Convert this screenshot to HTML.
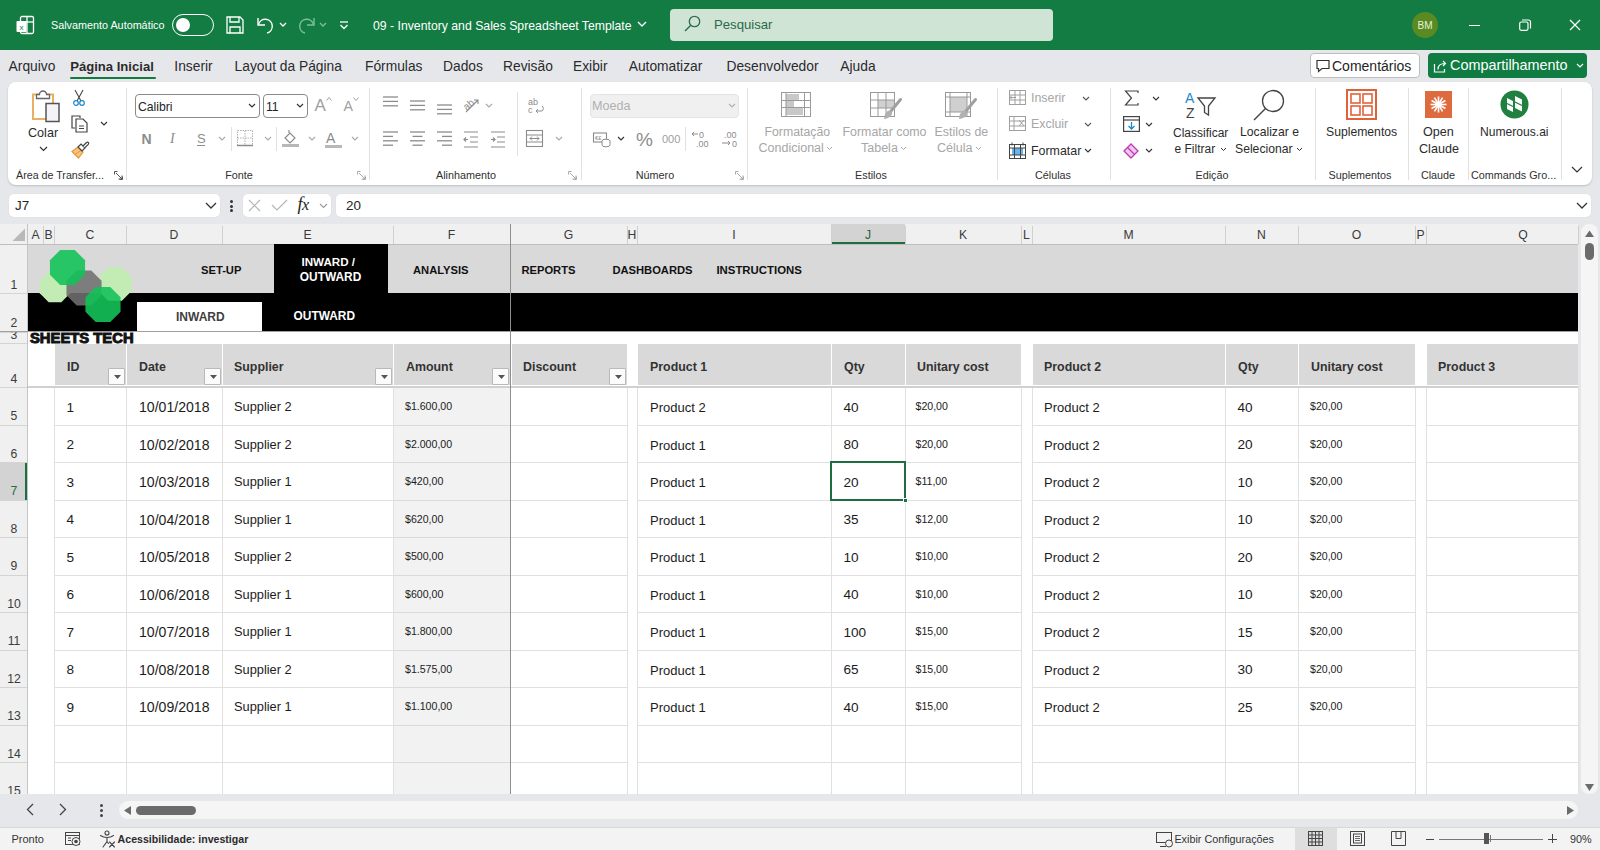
<!DOCTYPE html><html><head><meta charset="utf-8"><style>
*{margin:0;padding:0;box-sizing:border-box}
html,body{width:1600px;height:850px;overflow:hidden;background:#e6e7eb;font-family:"Liberation Sans",sans-serif;color:#242424}
.ab{position:absolute}
.t{position:absolute;white-space:nowrap;line-height:1}
svg{position:absolute;overflow:visible}
</style></head><body><div class="ab" style="left:0px;top:0px;width:1600px;height:50px;background:#137c43"></div>
<svg style="left:16px;top:16px;" width="18" height="18" viewBox="0 0 18 18"><rect x="4.5" y="0.5" width="13" height="17" rx="1.5" fill="none" stroke="#fff" stroke-width="1.3"/><line x1="11" y1="1" x2="11" y2="17" stroke="#fff" stroke-width="1.3"/><line x1="5" y1="6" x2="17" y2="6" stroke="#fff" stroke-width="1.3"/><rect x="0.5" y="5" width="10" height="11" rx="1" fill="#fff"/><text x="5.5" y="13.5" font-size="8" text-anchor="middle" fill="#137c43" font-family="Liberation Sans">x</text></svg>
<div class="t" style="left:51px;top:19.86px;font-size:10.8px;color:#fff;font-weight:400;">Salvamento Automático</div>
<div class="ab" style="left:172px;top:14px;width:42px;height:22px;border:1.5px solid #fff;border-radius:11px"></div>
<div class="ab" style="left:176px;top:18px;width:14px;height:14px;background:#fff;border-radius:50%"></div>
<svg style="left:226px;top:16px;" width="18" height="18" viewBox="0 0 18 18"><path d="M1 1h13l3 3v13H1z" fill="none" stroke="#fff" stroke-width="1.3"/><path d="M4 1v5h9V1" fill="none" stroke="#fff" stroke-width="1.3"/><path d="M4 17v-6h10v6" fill="none" stroke="#fff" stroke-width="1.3"/></svg>
<svg style="left:256px;top:16px;" width="20" height="18" viewBox="0 0 20 18"><path d="M2 2v7h7" fill="none" stroke="#fff" stroke-width="1.4"/><path d="M2.5 8.5A7 7 0 1 1 11 17" fill="none" stroke="#fff" stroke-width="1.4"/></svg>
<svg style="left:279px;top:22px;" width="8" height="6" viewBox="0 0 8 6"><path d="M1 1l3 3 3-3" fill="none" stroke="#fff" stroke-width="1.3"/></svg>
<svg style="left:296px;top:16px;" width="20" height="18" viewBox="0 0 20 18"><path d="M18 2v7h-7" fill="none" stroke="#7fbf99" stroke-width="1.4"/><path d="M17.5 8.5A7 7 0 1 0 9 17" fill="none" stroke="#7fbf99" stroke-width="1.4"/></svg>
<svg style="left:319px;top:22px;" width="8" height="6" viewBox="0 0 8 6"><path d="M1 1l3 3 3-3" fill="none" stroke="#7fbf99" stroke-width="1.3"/></svg>
<svg style="left:339px;top:21px;" width="10" height="9" viewBox="0 0 10 9"><line x1="1" y1="1" x2="9" y2="1" stroke="#fff" stroke-width="1.3"/><path d="M1.5 4l3.5 3.5 3.5-3.5" fill="none" stroke="#fff" stroke-width="1.3"/></svg>
<div class="t" style="left:373px;top:19.63px;font-size:12.25px;color:#fff;font-weight:400;">09 - Inventory and Sales Spreadsheet Template</div>
<svg style="left:637px;top:21px;" width="10" height="7" viewBox="0 0 10 7"><path d="M1 1l4 4 4-4" fill="none" stroke="#fff" stroke-width="1.3"/></svg>
<div class="ab" style="left:670px;top:9px;width:383px;height:32px;background:#d0e4d6;border-radius:4px"></div>
<svg style="left:684px;top:15px;" width="17" height="17" viewBox="0 0 17 17"><circle cx="10.5" cy="6.5" r="5.2" fill="none" stroke="#2e6b48" stroke-width="1.3"/><line x1="6.8" y1="10.2" x2="1" y2="16" stroke="#2e6b48" stroke-width="1.4"/></svg>
<div class="t" style="left:714px;top:18.37px;font-size:13.15px;color:#2c6946;font-weight:400;">Pesquisar</div>
<div class="ab" style="left:1412px;top:12px;width:26px;height:26px;background:#5a8a22;border-radius:50%"></div>
<div class="t" style="left:1417.5px;top:20.54px;font-size:10px;color:#e9f2dc;font-weight:400;">BM</div>
<div class="ab" style="left:1469px;top:24.5px;width:11px;height:1.2px;background:#fff"></div>
<svg style="left:1519px;top:19px;" width="12" height="12" viewBox="0 0 12 12"><rect x="0.7" y="3" width="8.3" height="8.3" rx="1.5" fill="none" stroke="#fff" stroke-width="1.2"/><path d="M3 1h6.5a2 2 0 0 1 2 2v6.5" fill="none" stroke="#fff" stroke-width="1.2"/></svg>
<svg style="left:1569px;top:19px;" width="12" height="12" viewBox="0 0 12 12"><path d="M1 1l10 10M11 1L1 11" stroke="#fff" stroke-width="1.3"/></svg>
<div class="t" style="left:8px;top:59.82px;font-size:13.8px;font-weight:400;color:#2b2b2b;width:48px;text-align:center">Arquivo</div>
<div class="t" style="left:70px;top:60.41px;font-size:13.1px;font-weight:700;color:#2b2b2b;width:84px;text-align:center">Página Inicial</div>
<div class="t" style="left:174px;top:59.82px;font-size:13.8px;font-weight:400;color:#2b2b2b;width:39px;text-align:center">Inserir</div>
<div class="t" style="left:234px;top:59.82px;font-size:13.8px;font-weight:400;color:#2b2b2b;width:108.5px;text-align:center">Layout da Página</div>
<div class="t" style="left:365px;top:59.82px;font-size:13.8px;font-weight:400;color:#2b2b2b;width:57px;text-align:center">Fórmulas</div>
<div class="t" style="left:443px;top:59.82px;font-size:13.8px;font-weight:400;color:#2b2b2b;width:39px;text-align:center">Dados</div>
<div class="t" style="left:503px;top:59.82px;font-size:13.8px;font-weight:400;color:#2b2b2b;width:47px;text-align:center">Revisão</div>
<div class="t" style="left:573px;top:59.82px;font-size:13.8px;font-weight:400;color:#2b2b2b;width:33.5px;text-align:center">Exibir</div>
<div class="t" style="left:627px;top:59.82px;font-size:13.8px;font-weight:400;color:#2b2b2b;width:77px;text-align:center">Automatizar</div>
<div class="t" style="left:726px;top:59.82px;font-size:13.8px;font-weight:400;color:#2b2b2b;width:93px;text-align:center">Desenvolvedor</div>
<div class="t" style="left:840px;top:59.82px;font-size:13.8px;font-weight:400;color:#2b2b2b;width:36px;text-align:center">Ajuda</div>
<div class="ab" style="left:70px;top:76.5px;width:86px;height:2.5px;background:#107c41;border-radius:1px"></div>
<div class="ab" style="left:1310px;top:53px;width:110px;height:25px;background:#fff;border:1px solid #bdbdbd;border-radius:4px"></div>
<svg style="left:1316px;top:59px;" width="14" height="14" viewBox="0 0 14 14"><path d="M1 1.5h12v8H6l-3.5 3v-3H1z" fill="none" stroke="#333" stroke-width="1.2"/></svg>
<div class="t" style="left:1332px;top:58.65px;font-size:14px;color:#242424;font-weight:400;">Comentários</div>
<div class="ab" style="left:1428px;top:53px;width:159px;height:25px;background:#107c41;border-radius:4px"></div>
<svg style="left:1433px;top:59px;" width="15" height="14" viewBox="0 0 15 14"><path d="M1.5 5v8h10V10" fill="none" stroke="#fff" stroke-width="1.2"/><path d="M5 10.5c0-4 2.5-6 7-6M10 2l2.5 2.5L10 7" fill="none" stroke="#fff" stroke-width="1.2"/></svg>
<div class="t" style="left:1450px;top:58.31px;font-size:14.4px;color:#fff;font-weight:400;">Compartilhamento</div>
<svg style="left:1576px;top:63px;" width="8" height="6" viewBox="0 0 8 6"><path d="M1 1l3 3 3-3" fill="none" stroke="#fff" stroke-width="1.2"/></svg>
<!--RIBBON-->
<!--FORMULA-->
<!--GRID-->
<!--BOTTOM-->
<div class="ab" style="left:8px;top:82px;width:1584px;height:103px;background:#fff;border-radius:8px;box-shadow:0 1px 2px rgba(0,0,0,0.18)"></div>
<div class="ab" style="left:126px;top:88px;width:1px;height:92px;background:#e1e1e1"></div>
<div class="ab" style="left:369px;top:88px;width:1px;height:92px;background:#e1e1e1"></div>
<div class="ab" style="left:581px;top:88px;width:1px;height:92px;background:#e1e1e1"></div>
<div class="ab" style="left:747px;top:88px;width:1px;height:92px;background:#e1e1e1"></div>
<div class="ab" style="left:997px;top:88px;width:1px;height:92px;background:#e1e1e1"></div>
<div class="ab" style="left:1110px;top:88px;width:1px;height:92px;background:#e1e1e1"></div>
<div class="ab" style="left:1315px;top:88px;width:1px;height:92px;background:#e1e1e1"></div>
<div class="ab" style="left:1408px;top:88px;width:1px;height:92px;background:#e1e1e1"></div>
<div class="ab" style="left:1468px;top:88px;width:1px;height:92px;background:#e1e1e1"></div>
<div class="ab" style="left:1561px;top:88px;width:1px;height:92px;background:#e1e1e1"></div>
<div class="ab" style="left:517px;top:92px;width:1px;height:64px;background:#e1e1e1"></div>
<div class="t" style="left:16px;top:169.94px;font-size:10.7px;color:#303030;font-weight:400;">Área de Transfer...</div>
<div class="t" style="left:200px;top:169.86px;width:78px;text-align:center;font-size:10.8px;color:#303030">Fonte</div>
<div class="t" style="left:420px;top:169.86px;width:92px;text-align:center;font-size:10.8px;color:#303030">Alinhamento</div>
<div class="t" style="left:620px;top:169.86px;width:70px;text-align:center;font-size:10.8px;color:#303030">Número</div>
<div class="t" style="left:830px;top:169.86px;width:82px;text-align:center;font-size:10.8px;color:#303030">Estilos</div>
<div class="t" style="left:1010px;top:169.86px;width:86px;text-align:center;font-size:10.8px;color:#303030">Células</div>
<div class="t" style="left:1170px;top:169.86px;width:84px;text-align:center;font-size:10.8px;color:#303030">Edição</div>
<div class="t" style="left:1320px;top:169.86px;width:80px;text-align:center;font-size:10.8px;color:#303030">Suplementos</div>
<div class="t" style="left:1409px;top:169.86px;width:58px;text-align:center;font-size:10.8px;color:#303030">Claude</div>
<div class="t" style="left:1471px;top:169.86px;font-size:10.8px;color:#303030;font-weight:400;">Commands Gro...</div>
<svg style="left:114px;top:171px;" width="9" height="9" viewBox="0 0 9 9"><path d="M0.5 3.5V0.5h3M8.5 5.5v3h-3M2 2l6 6M8 4.5V8H4.5" fill="none" stroke="#555" stroke-width="1"/></svg>
<svg style="left:357px;top:171px;" width="9" height="9" viewBox="0 0 9 9"><path d="M0.5 3.5V0.5h3M8.5 5.5v3h-3M2 2l6 6M8 4.5V8H4.5" fill="none" stroke="#aaa" stroke-width="1"/></svg>
<svg style="left:568px;top:171px;" width="9" height="9" viewBox="0 0 9 9"><path d="M0.5 3.5V0.5h3M8.5 5.5v3h-3M2 2l6 6M8 4.5V8H4.5" fill="none" stroke="#aaa" stroke-width="1"/></svg>
<svg style="left:735px;top:171px;" width="9" height="9" viewBox="0 0 9 9"><path d="M0.5 3.5V0.5h3M8.5 5.5v3h-3M2 2l6 6M8 4.5V8H4.5" fill="none" stroke="#aaa" stroke-width="1"/></svg>
<svg style="left:28px;top:88px;" width="34" height="36" viewBox="0 0 34 36"><rect x="5" y="6.5" width="20" height="24.5" fill="#fff" stroke="#eab061" stroke-width="2"/><path d="M8.5 10.5V6.5h3a3.5 3.5 0 0 1 7 0h3v4z" fill="#fff" stroke="#666" stroke-width="1.3"/><rect x="18" y="15.5" width="13" height="18" fill="#f3f3f8" stroke="#555" stroke-width="1.5"/></svg>
<div class="t" style="left:28px;top:127.33px;font-size:12.6px;color:#2b2b2b;font-weight:400;">Colar</div>
<svg style="left:39px;top:146px;" width="9" height="6" viewBox="0 0 9 6"><path d="M1 1l3.5 3.5L8 1" fill="none" stroke="#333" stroke-width="1.2"/></svg>
<svg style="left:72px;top:89px;" width="14" height="17" viewBox="0 0 14 17"><path d="M3 1l6 11M11 1L5 12" stroke="#444" stroke-width="1.1"/><circle cx="4" cy="14" r="2.3" fill="none" stroke="#1e88c8" stroke-width="1.2"/><circle cx="10" cy="14" r="2.3" fill="none" stroke="#1e88c8" stroke-width="1.2"/></svg>
<svg style="left:71px;top:115px;" width="18" height="18" viewBox="0 0 18 18"><path d="M4 13H1V1h8v2" fill="none" stroke="#444" stroke-width="1.2"/><path d="M5 4h7l4 4v9H5z" fill="#fff" stroke="#444" stroke-width="1.2"/><path d="M8 11h5M8 13.5h5" stroke="#444" stroke-width="1"/></svg>
<svg style="left:100px;top:121px;" width="8" height="6" viewBox="0 0 8 6"><path d="M1 1l3 3 3-3" fill="none" stroke="#333" stroke-width="1.2"/></svg>
<svg style="left:70px;top:141px;" width="19" height="18" viewBox="0 0 19 18"><path d="M2 10.5l6-4.5 5 5-4.5 6z" fill="#f6c47e" stroke="#e8963d" stroke-width="1.2"/><path d="M5 13.5l6-4" stroke="#e8963d" stroke-width="1"/><path d="M8 6l3-3 4 4-3 3z" fill="#fff" stroke="#444" stroke-width="1.2"/><path d="M13 5l3.5-3.5a1.2 1.2 0 0 1 1.8 1.8L15 6.5" fill="#fff" stroke="#444" stroke-width="1.2"/></svg>
<div class="ab" style="left:135px;top:94px;width:125px;height:24px;border:1px solid #8a8a8a;border-radius:4px;background:#fff"></div>
<div class="t" style="left:138px;top:100.67px;font-size:12.2px;color:#242424;font-weight:400;">Calibri</div>
<svg style="left:248px;top:103px;" width="8" height="6" viewBox="0 0 8 6"><path d="M1 1l3 3 3-3" fill="none" stroke="#333" stroke-width="1.2"/></svg>
<div class="ab" style="left:263px;top:94px;width:45px;height:24px;border:1px solid #8a8a8a;border-radius:4px;background:#fff"></div>
<div class="t" style="left:266px;top:100.67px;font-size:12.2px;color:#242424;font-weight:400;">11</div>
<svg style="left:296px;top:103px;" width="8" height="6" viewBox="0 0 8 6"><path d="M1 1l3 3 3-3" fill="none" stroke="#333" stroke-width="1.2"/></svg>
<div class="t" style="left:314.5px;top:97.11px;font-size:17px;color:#a0a0a0;font-weight:400;">A</div>
<svg style="left:326px;top:97px;" width="6" height="4" viewBox="0 0 6 4"><path d="M0.5 3.5l2.5-3 2.5 3" fill="none" stroke="#a0a0a0" stroke-width="1"/></svg>
<div class="t" style="left:343.5px;top:99.48px;font-size:14.2px;color:#a0a0a0;font-weight:400;">A</div>
<svg style="left:353px;top:97px;" width="6" height="4" viewBox="0 0 6 4"><path d="M0.5 0.5l2.5 3 2.5-3" fill="none" stroke="#a0a0a0" stroke-width="1"/></svg>
<div class="t" style="left:141.5px;top:132.15px;font-size:14px;color:#8c8c8c;font-weight:700;">N</div>
<div class="t" style="left:170px;top:132.15px;font-size:14px;color:#8c8c8c;font-family:'Liberation Serif';font-style:italic">I</div>
<div class="t" style="left:197px;top:132.00px;font-size:13px;color:#8c8c8c;font-weight:400;">S</div>
<div class="ab" style="left:197px;top:145px;width:8px;height:1px;background:#8c8c8c"></div>
<svg style="left:218px;top:136px;" width="8" height="5" viewBox="0 0 8 5"><path d="M1 1l3 3 3-3" fill="none" stroke="#a8a8a8" stroke-width="1.1"/></svg>
<svg style="left:264px;top:136px;" width="8" height="5" viewBox="0 0 8 5"><path d="M1 1l3 3 3-3" fill="none" stroke="#a8a8a8" stroke-width="1.1"/></svg>
<svg style="left:308px;top:136px;" width="8" height="5" viewBox="0 0 8 5"><path d="M1 1l3 3 3-3" fill="none" stroke="#a8a8a8" stroke-width="1.1"/></svg>
<svg style="left:351px;top:136px;" width="8" height="5" viewBox="0 0 8 5"><path d="M1 1l3 3 3-3" fill="none" stroke="#a8a8a8" stroke-width="1.1"/></svg>
<div class="ab" style="left:231px;top:127px;width:1px;height:24px;background:#e1e1e1"></div>
<div class="ab" style="left:276px;top:127px;width:1px;height:24px;background:#e1e1e1"></div>
<svg style="left:237px;top:130px;" width="17" height="17" viewBox="0 0 17 17"><rect x="0.5" y="0.5" width="15" height="15" fill="none" stroke="#b0b0b0" stroke-dasharray="1.5 1"/><path d="M8 0.5v15M0.5 8h15" stroke="#b0b0b0" stroke-dasharray="1.5 1"/><path d="M0 15.5h16" stroke="#8c8c8c" stroke-width="1.5"/></svg>
<svg style="left:282px;top:129px;" width="17" height="19" viewBox="0 0 17 19"><path d="M3 9l5-5 5 5-5 5z" fill="none" stroke="#8c8c8c" stroke-width="1.2"/><path d="M7 4V1" stroke="#8c8c8c" stroke-width="1.2"/><rect x="0" y="15" width="17" height="3" fill="#b8b8b8"/></svg>
<div class="t" style="left:326px;top:131.15px;font-size:14px;color:#8c8c8c;font-weight:400;">A</div>
<div class="ab" style="left:325px;top:145px;width:17px;height:3px;background:#b8b8b8"></div>
<svg style="left:383px;top:96px;" width="16" height="16" viewBox="0 0 16 16"><line x1="0" y1="1.0" x2="15" y2="1.0" stroke="#8c8c8c" stroke-width="1.3"/><line x1="0" y1="5.4" x2="15" y2="5.4" stroke="#8c8c8c" stroke-width="1.3"/><line x1="0" y1="9.8" x2="15" y2="9.8" stroke="#8c8c8c" stroke-width="1.3"/></svg>
<svg style="left:410px;top:100px;" width="16" height="16" viewBox="0 0 16 16"><line x1="0" y1="1.0" x2="15" y2="1.0" stroke="#8c8c8c" stroke-width="1.3"/><line x1="0" y1="5.4" x2="15" y2="5.4" stroke="#8c8c8c" stroke-width="1.3"/><line x1="0" y1="9.8" x2="15" y2="9.8" stroke="#8c8c8c" stroke-width="1.3"/></svg>
<svg style="left:437px;top:104px;" width="16" height="16" viewBox="0 0 16 16"><line x1="0" y1="1.0" x2="15" y2="1.0" stroke="#8c8c8c" stroke-width="1.3"/><line x1="0" y1="5.4" x2="15" y2="5.4" stroke="#8c8c8c" stroke-width="1.3"/><line x1="0" y1="9.8" x2="15" y2="9.8" stroke="#8c8c8c" stroke-width="1.3"/></svg>
<svg style="left:462px;top:96px;" width="18" height="17" viewBox="0 0 18 17"><text x="1" y="11" font-size="10" fill="#8c8c8c" transform="rotate(-40 8 8)" font-family="Liberation Sans">ab</text><path d="M4 16L16 4M12 4h4v4" fill="none" stroke="#8c8c8c" stroke-width="1.1"/></svg>
<svg style="left:485px;top:103px;" width="8" height="5" viewBox="0 0 8 5"><path d="M1 1l3 3 3-3" fill="none" stroke="#a8a8a8" stroke-width="1.1"/></svg>
<svg style="left:383px;top:131px;" width="16" height="16" viewBox="0 0 16 16"><line x1="0" y1="1.0" x2="15" y2="1.0" stroke="#8c8c8c" stroke-width="1.3"/><line x1="0" y1="5.4" x2="10" y2="5.4" stroke="#8c8c8c" stroke-width="1.3"/><line x1="0" y1="9.8" x2="15" y2="9.8" stroke="#8c8c8c" stroke-width="1.3"/><line x1="0" y1="14.200000000000001" x2="10" y2="14.200000000000001" stroke="#8c8c8c" stroke-width="1.3"/></svg>
<svg style="left:410px;top:131px;" width="16" height="16" viewBox="0 0 16 16"><line x1="0" y1="1.0" x2="15" y2="1.0" stroke="#8c8c8c" stroke-width="1.3"/><line x1="2.5" y1="5.4" x2="12.5" y2="5.4" stroke="#8c8c8c" stroke-width="1.3"/><line x1="0" y1="9.8" x2="15" y2="9.8" stroke="#8c8c8c" stroke-width="1.3"/><line x1="2.5" y1="14.200000000000001" x2="12.5" y2="14.200000000000001" stroke="#8c8c8c" stroke-width="1.3"/></svg>
<svg style="left:437px;top:131px;" width="16" height="16" viewBox="0 0 16 16"><line x1="0" y1="1.0" x2="15" y2="1.0" stroke="#8c8c8c" stroke-width="1.3"/><line x1="5" y1="5.4" x2="15" y2="5.4" stroke="#8c8c8c" stroke-width="1.3"/><line x1="0" y1="9.8" x2="15" y2="9.8" stroke="#8c8c8c" stroke-width="1.3"/><line x1="5" y1="14.200000000000001" x2="15" y2="14.200000000000001" stroke="#8c8c8c" stroke-width="1.3"/></svg>
<svg style="left:463px;top:131px;" width="16" height="16" viewBox="0 0 16 16"><path d="M1 1h14M7 6h8M7 11h8M1 16h14M5 8.5H1M3 6.5l-2 2 2 2" fill="none" stroke="#8c8c8c" stroke-width="1.2"/></svg>
<svg style="left:490px;top:131px;" width="16" height="16" viewBox="0 0 16 16"><path d="M1 1h14M7 6h8M7 11h8M1 16h14M1 8.5h4M3 6.5l2 2-2 2" fill="none" stroke="#8c8c8c" stroke-width="1.2"/></svg>
<svg style="left:528px;top:97px;" width="17" height="17" viewBox="0 0 17 17"><text x="0" y="8" font-size="9" fill="#8c8c8c" font-family="Liberation Sans">ab</text><text x="0" y="16" font-size="9" fill="#8c8c8c" font-family="Liberation Sans">c</text><path d="M14 9a3 3 0 0 1 0 5H8M10 12l-2 2 2 2" fill="none" stroke="#8c8c8c" stroke-width="1"/></svg>
<svg style="left:526px;top:130px;" width="17" height="17" viewBox="0 0 17 17"><rect x="0.5" y="0.5" width="16" height="16" fill="none" stroke="#8c8c8c" stroke-width="1.1"/><path d="M0.5 5h16M0.5 12h16M4 8.5h9M6 6.5l-2 2 2 2M11 6.5l2 2-2 2" fill="none" stroke="#8c8c8c" stroke-width="1"/></svg>
<svg style="left:555px;top:136px;" width="8" height="5" viewBox="0 0 8 5"><path d="M1 1l3 3 3-3" fill="none" stroke="#a8a8a8" stroke-width="1.1"/></svg>
<div class="ab" style="left:590px;top:94px;width:149px;height:24px;background:#f0f0f0;border:1px solid #e4e4e4;border-radius:4px"></div>
<div class="t" style="left:592px;top:100.33px;font-size:12.6px;color:#b0b0b0;font-weight:400;">Moeda</div>
<svg style="left:728px;top:103px;" width="8" height="5" viewBox="0 0 8 5"><path d="M1 1l3 3 3-3" fill="none" stroke="#b0b0b0" stroke-width="1.1"/></svg>
<svg style="left:593px;top:130px;" width="18" height="17" viewBox="0 0 18 17"><rect x="0.5" y="3" width="13" height="9" fill="none" stroke="#8c8c8c" stroke-width="1.1"/><text x="2" y="10" font-size="6" fill="#8c8c8c" font-family="Liberation Sans">€£</text><ellipse cx="13" cy="11" rx="4" ry="1.8" fill="#fff" stroke="#8c8c8c"/><path d="M9 11v4a4 1.8 0 0 0 8 0v-4" fill="#fff" stroke="#8c8c8c"/></svg>
<svg style="left:617px;top:136px;" width="8" height="5" viewBox="0 0 8 5"><path d="M1 1l3 3 3-3" fill="none" stroke="#333" stroke-width="1.2"/></svg>
<div class="t" style="left:636px;top:129.92px;font-size:19px;color:#8c8c8c;font-weight:400;">%</div>
<div class="t" style="left:662px;top:133.69px;font-size:11px;color:#a0a0a0;font-weight:400;">000</div>
<div class="ab" style="left:685px;top:127px;width:1px;height:24px;background:#e1e1e1"></div>
<svg style="left:691px;top:130px;" width="18" height="18" viewBox="0 0 18 18"><text x="8" y="8" font-size="9" fill="#8c8c8c" font-family="Liberation Sans">0</text><text x="5" y="17" font-size="9" fill="#8c8c8c" font-family="Liberation Sans">.00</text><path d="M7 4H1M3 2L1 4l2 2" fill="none" stroke="#8c8c8c" stroke-width="1"/></svg>
<svg style="left:721px;top:130px;" width="18" height="18" viewBox="0 0 18 18"><text x="3" y="8" font-size="9" fill="#8c8c8c" font-family="Liberation Sans">.00</text><text x="11" y="17" font-size="9" fill="#8c8c8c" font-family="Liberation Sans">0</text><path d="M1 13h8M7 11l2 2-2 2" fill="none" stroke="#8c8c8c" stroke-width="1"/></svg>
<svg style="left:781px;top:92px;" width="31" height="26" viewBox="0 0 31 26"><rect x="0.5" y="0.5" width="29" height="24" fill="#fff" stroke="#9a9a9a"/><rect x="5" y="2" width="13" height="6" fill="#c8c8c8"/><rect x="5" y="9" width="8" height="6" fill="#c8c8c8"/><rect x="5" y="16" width="17" height="7" fill="#c8c8c8"/><path d="M0.5 8.5h29M0.5 15.5h29M5 0.5v24M23.5 0.5v24" stroke="#9a9a9a"/></svg>
<svg style="left:870px;top:92px;" width="33" height="28" viewBox="0 0 33 28"><rect x="0.5" y="0.5" width="24" height="24" fill="#fff" stroke="#9a9a9a"/><rect x="8" y="8" width="16" height="8" fill="#d0d0d0"/><path d="M0.5 8h24M0.5 16h24M8 0.5v24M16 0.5v24" stroke="#9a9a9a"/><path d="M30.5 7.5L21 19" stroke="#a0a0a0" stroke-width="3" stroke-linecap="round"/><path d="M14 27c0.5-5 2.5-8.5 5.5-8.5 2 0 3 1.5 2.5 3.5-1 3-4.5 4.5-8 5z" fill="#b0b0b0"/></svg>
<svg style="left:945px;top:92px;" width="33" height="28" viewBox="0 0 33 28"><rect x="0.5" y="0.5" width="25" height="24" fill="#fff" stroke="#9a9a9a"/><rect x="5" y="5" width="17" height="15" fill="#cfcfcf"/><path d="M0.5 5h25M5 0.5v24M22 0.5v24M0.5 20h25" stroke="#9a9a9a"/><path d="M30.5 7.5L21 19" stroke="#a0a0a0" stroke-width="3" stroke-linecap="round"/><path d="M14 27c0.5-5 2.5-8.5 5.5-8.5 2 0 3 1.5 2.5 3.5-1 3-4.5 4.5-8 5z" fill="#b0b0b0"/></svg>
<div class="t" style="left:764.5px;top:126.09px;font-size:12.3px;color:#a6a6a6;font-weight:400;">Formatação</div>
<div class="t" style="left:758.5px;top:142.42px;font-size:12.5px;color:#a6a6a6;font-weight:400;">Condicional</div>
<svg style="left:826px;top:146px;" width="7" height="5" viewBox="0 0 7 5"><path d="M1 1l2.5 2.5L6 1" fill="none" stroke="#aaa" stroke-width="1"/></svg>
<div class="t" style="left:842.5px;top:126.00px;font-size:12.4px;color:#a6a6a6;font-weight:400;">Formatar como</div>
<div class="t" style="left:861px;top:142.42px;font-size:12.5px;color:#a6a6a6;font-weight:400;">Tabela</div>
<svg style="left:900px;top:146px;" width="7" height="5" viewBox="0 0 7 5"><path d="M1 1l2.5 2.5L6 1" fill="none" stroke="#aaa" stroke-width="1"/></svg>
<div class="t" style="left:934.5px;top:126.00px;font-size:12.4px;color:#a6a6a6;font-weight:400;">Estilos de</div>
<div class="t" style="left:937px;top:142.42px;font-size:12.5px;color:#a6a6a6;font-weight:400;">Célula</div>
<svg style="left:975px;top:146px;" width="7" height="5" viewBox="0 0 7 5"><path d="M1 1l2.5 2.5L6 1" fill="none" stroke="#aaa" stroke-width="1"/></svg>
<svg style="left:1009px;top:90px;" width="18" height="16" viewBox="0 0 18 16"><rect x="0.5" y="0.5" width="16" height="14" fill="none" stroke="#a0a0a0"/><path d="M6 0.5v14M11 0.5v14M0.5 5h16M0.5 10h16" stroke="#a0a0a0"/><path d="M1 7.5h6M3 5.5l-2 2 2 2" stroke="#a0a0a0" fill="none"/></svg>
<div class="t" style="left:1031px;top:92.10px;font-size:12.4px;color:#a6a6a6;font-weight:400;">Inserir</div>
<svg style="left:1082px;top:96px;" width="8" height="5" viewBox="0 0 8 5"><path d="M1 1l3 3 3-3" fill="none" stroke="#555" stroke-width="1.1"/></svg>
<svg style="left:1009px;top:116px;" width="18" height="16" viewBox="0 0 18 16"><rect x="0.5" y="0.5" width="16" height="14" fill="none" stroke="#a0a0a0"/><path d="M0.5 5h16M0.5 10h16M5 0.5v14" stroke="#a0a0a0"/><path d="M10 4l5 6M15 4l-5 6" stroke="#a0a0a0"/></svg>
<div class="t" style="left:1031px;top:118.20px;font-size:12.4px;color:#a6a6a6;font-weight:400;">Excluir</div>
<svg style="left:1084px;top:122px;" width="8" height="5" viewBox="0 0 8 5"><path d="M1 1l3 3 3-3" fill="none" stroke="#555" stroke-width="1.1"/></svg>
<svg style="left:1009px;top:142px;" width="18" height="17" viewBox="0 0 18 17"><rect x="0.5" y="2.5" width="16" height="14" fill="#fff" stroke="#444"/><rect x="3" y="6" width="11" height="7" fill="#69b4ea"/><path d="M0.5 6h16M0.5 13h16M5.5 2.5v14M11.5 2.5v14" stroke="#444"/><path d="M3 0.5v3M14 0.5v3" stroke="#444"/></svg>
<div class="t" style="left:1031px;top:145.00px;font-size:12.4px;color:#2b2b2b;font-weight:400;">Formatar</div>
<svg style="left:1084px;top:148px;" width="8" height="5" viewBox="0 0 8 5"><path d="M1 1l3 3 3-3" fill="none" stroke="#333" stroke-width="1.1"/></svg>
<svg style="left:1124px;top:90px;" width="16" height="16" viewBox="0 0 16 16"><path d="M14 3V1H1.5l6 7-6 7H14v-2" fill="none" stroke="#444" stroke-width="1.2"/></svg>
<svg style="left:1152px;top:96px;" width="8" height="5" viewBox="0 0 8 5"><path d="M1 1l3 3 3-3" fill="none" stroke="#333" stroke-width="1.1"/></svg>
<svg style="left:1123px;top:116px;" width="18" height="16" viewBox="0 0 18 16"><rect x="0.6" y="0.6" width="15.8" height="14.8" fill="none" stroke="#444" stroke-width="1.2"/><path d="M0.6 4h15.8" stroke="#444" stroke-width="1.2"/><path d="M8.5 6v7M5.5 10l3 3 3-3" fill="none" stroke="#1e88c8" stroke-width="1.3"/></svg>
<svg style="left:1145px;top:122px;" width="8" height="5" viewBox="0 0 8 5"><path d="M1 1l3 3 3-3" fill="none" stroke="#333" stroke-width="1.1"/></svg>
<svg style="left:1123px;top:142px;" width="17" height="17" viewBox="0 0 17 17"><path d="M1 9l7-7 7 7-7 7z" fill="#f4c4ee" stroke="#b73fb3" stroke-width="1.3"/><path d="M4.5 5.5l7 7" stroke="#b73fb3" stroke-width="1.2"/></svg>
<svg style="left:1145px;top:148px;" width="8" height="5" viewBox="0 0 8 5"><path d="M1 1l3 3 3-3" fill="none" stroke="#333" stroke-width="1.1"/></svg>
<svg style="left:1185px;top:90px;" width="32" height="30" viewBox="0 0 32 30"><text x="0" y="13" font-size="14" fill="#1e88c8" font-family="Liberation Sans">A</text><text x="1" y="28" font-size="14" fill="#444" font-family="Liberation Sans">Z</text><path d="M13 8h17l-6.5 8v9l-4-2.5v-6.5z" fill="none" stroke="#444" stroke-width="1.3"/></svg>
<div class="t" style="left:1173px;top:126.54px;font-size:12px;color:#2b2b2b;font-weight:400;">Classificar</div>
<div class="t" style="left:1174.5px;top:143.34px;font-size:12px;color:#2b2b2b;font-weight:400;">e Filtrar</div>
<svg style="left:1220px;top:147px;" width="7" height="5" viewBox="0 0 7 5"><path d="M1 1l2.5 2.5L6 1" fill="none" stroke="#333" stroke-width="1"/></svg>
<svg style="left:1253px;top:89px;" width="33" height="32" viewBox="0 0 33 32"><circle cx="20" cy="12" r="10.5" fill="none" stroke="#444" stroke-width="1.3"/><path d="M12.5 19.5L1 31" stroke="#444" stroke-width="1.4"/></svg>
<div class="t" style="left:1240px;top:126.37px;font-size:12.2px;color:#2b2b2b;font-weight:400;">Localizar e</div>
<div class="t" style="left:1235px;top:143.17px;font-size:12.2px;color:#2b2b2b;font-weight:400;">Selecionar</div>
<svg style="left:1296px;top:147px;" width="7" height="5" viewBox="0 0 7 5"><path d="M1 1l2.5 2.5L6 1" fill="none" stroke="#333" stroke-width="1"/></svg>
<svg style="left:1346px;top:89px;" width="31" height="31" viewBox="0 0 31 31"><rect x="1" y="1" width="29" height="29" fill="none" stroke="#e0623a" stroke-width="2"/><rect x="5" y="5" width="9" height="9" fill="none" stroke="#e0623a" stroke-width="1.6"/><rect x="17" y="5" width="9" height="9" fill="none" stroke="#e0623a" stroke-width="1.6"/><rect x="5" y="17" width="9" height="9" fill="none" stroke="#e0623a" stroke-width="1.6"/><rect x="17" y="17" width="9" height="9" fill="none" stroke="#e0623a" stroke-width="1.6"/></svg>
<div class="t" style="left:1326px;top:126.37px;font-size:12.2px;color:#2b2b2b;font-weight:400;">Suplementos</div>
<svg style="left:1425px;top:91px;" width="27" height="27" viewBox="0 0 27 27"><rect x="0" y="0" width="27" height="27" fill="#de6b3f"/><line x1="13.5" y1="13.5" x2="21.50" y2="13.50" stroke="#fff" stroke-width="1.6"/><line x1="13.5" y1="13.5" x2="20.43" y2="17.50" stroke="#fff" stroke-width="1.6"/><line x1="13.5" y1="13.5" x2="17.50" y2="20.43" stroke="#fff" stroke-width="1.6"/><line x1="13.5" y1="13.5" x2="13.50" y2="21.50" stroke="#fff" stroke-width="1.6"/><line x1="13.5" y1="13.5" x2="9.50" y2="20.43" stroke="#fff" stroke-width="1.6"/><line x1="13.5" y1="13.5" x2="6.57" y2="17.50" stroke="#fff" stroke-width="1.6"/><line x1="13.5" y1="13.5" x2="5.50" y2="13.50" stroke="#fff" stroke-width="1.6"/><line x1="13.5" y1="13.5" x2="6.57" y2="9.50" stroke="#fff" stroke-width="1.6"/><line x1="13.5" y1="13.5" x2="9.50" y2="6.57" stroke="#fff" stroke-width="1.6"/><line x1="13.5" y1="13.5" x2="13.50" y2="5.50" stroke="#fff" stroke-width="1.6"/><line x1="13.5" y1="13.5" x2="17.50" y2="6.57" stroke="#fff" stroke-width="1.6"/><line x1="13.5" y1="13.5" x2="20.43" y2="9.50" stroke="#fff" stroke-width="1.6"/></svg>
<div class="t" style="left:1423px;top:126.03px;font-size:12.6px;color:#2b2b2b;font-weight:400;">Open</div>
<div class="t" style="left:1419px;top:142.83px;font-size:12.6px;color:#2b2b2b;font-weight:400;">Claude</div>
<svg style="left:1500px;top:90px;" width="29" height="29" viewBox="0 0 29 29"><circle cx="14.5" cy="14.5" r="14" fill="#20803f"/><path d="M7 8l6 3v11l-6-3zM15 6l7 3.5v12L15 18z" fill="#fff"/><path d="M7 13.5l6 3M15 12l7 3.5" stroke="#20803f" stroke-width="1.3"/></svg>
<div class="t" style="left:1480px;top:126.46px;font-size:12.1px;color:#2b2b2b;font-weight:400;">Numerous.ai</div>
<svg style="left:1571px;top:166px;" width="12" height="7" viewBox="0 0 12 7"><path d="M1 1l5 5 5-5" fill="none" stroke="#333" stroke-width="1.2"/></svg>
<div class="ab" style="left:9px;top:194px;width:211px;height:23px;background:#fff;border-radius:5px;box-shadow:0 0 0 0.5px #e0e0e0"></div>
<div class="t" style="left:15px;top:199.36px;font-size:13.4px;color:#242424;font-weight:400;">J7</div>
<svg style="left:205px;top:202px;" width="12" height="7" viewBox="0 0 12 7"><path d="M1 1l5 5 5-5" fill="none" stroke="#333" stroke-width="1.3"/></svg>
<div class="ab" style="left:229.5px;top:200px;width:3px;height:3px;background:#333;border-radius:50%"></div>
<div class="ab" style="left:229.5px;top:204.5px;width:3px;height:3px;background:#333;border-radius:50%"></div>
<div class="ab" style="left:229.5px;top:209px;width:3px;height:3px;background:#333;border-radius:50%"></div>
<div class="ab" style="left:242.5px;top:194px;width:88px;height:23px;background:#fff;border-radius:5px;box-shadow:0 0 0 0.5px #e0e0e0"></div>
<svg style="left:248px;top:199px;" width="13" height="13" viewBox="0 0 13 13"><path d="M1 1l11 11M12 1L1 12" stroke="#b5b5b5" stroke-width="1.2"/></svg>
<svg style="left:271px;top:199px;" width="17" height="12" viewBox="0 0 17 12"><path d="M1 6l5 5L16 1" fill="none" stroke="#b5b5b5" stroke-width="1.2"/></svg>
<div class="t" style="left:297.5px;top:195px;font-size:18px;font-family:'Liberation Serif';font-style:italic;color:#222;letter-spacing:-0.5px">f<span style="font-size:16px">x</span></div>
<svg style="left:319px;top:203px;" width="9" height="6" viewBox="0 0 9 6"><path d="M1 1l3.5 3.5L8 1" fill="none" stroke="#999" stroke-width="1.1"/></svg>
<div class="ab" style="left:336px;top:194px;width:1255px;height:23px;background:#fff;border-radius:5px;box-shadow:0 0 0 0.5px #e0e0e0"></div>
<div class="t" style="left:346px;top:199.36px;font-size:13.4px;color:#242424;font-weight:400;">20</div>
<svg style="left:1576px;top:202px;" width="12" height="7" viewBox="0 0 12 7"><path d="M1 1l5 5 5-5" fill="none" stroke="#333" stroke-width="1.3"/></svg>
<div class="ab" style="left:0px;top:224px;width:1578px;height:570px;background:#fff"></div>
<div class="ab" style="left:0px;top:224px;width:1578px;height:20px;background:#f0f0f0"></div>
<div class="ab" style="left:831px;top:224px;width:74px;height:20px;background:#d3d3d3"></div>
<div class="ab" style="left:831px;top:242px;width:74px;height:2px;background:#1e6e42"></div>
<div class="ab" style="left:0px;top:244px;width:1578px;height:1px;background:#bfbfbf"></div>
<div class="ab" style="left:43px;top:226px;width:1px;height:18px;background:#d0d0d0"></div>
<div class="ab" style="left:54px;top:226px;width:1px;height:18px;background:#d0d0d0"></div>
<div class="ab" style="left:126px;top:226px;width:1px;height:18px;background:#d0d0d0"></div>
<div class="ab" style="left:222px;top:226px;width:1px;height:18px;background:#d0d0d0"></div>
<div class="ab" style="left:393px;top:226px;width:1px;height:18px;background:#d0d0d0"></div>
<div class="ab" style="left:510px;top:226px;width:1px;height:18px;background:#d0d0d0"></div>
<div class="ab" style="left:627px;top:226px;width:1px;height:18px;background:#d0d0d0"></div>
<div class="ab" style="left:637px;top:226px;width:1px;height:18px;background:#d0d0d0"></div>
<div class="ab" style="left:831px;top:226px;width:1px;height:18px;background:#d0d0d0"></div>
<div class="ab" style="left:905px;top:226px;width:1px;height:18px;background:#d0d0d0"></div>
<div class="ab" style="left:1021px;top:226px;width:1px;height:18px;background:#d0d0d0"></div>
<div class="ab" style="left:1032px;top:226px;width:1px;height:18px;background:#d0d0d0"></div>
<div class="ab" style="left:1225px;top:226px;width:1px;height:18px;background:#d0d0d0"></div>
<div class="ab" style="left:1298px;top:226px;width:1px;height:18px;background:#d0d0d0"></div>
<div class="ab" style="left:1415px;top:226px;width:1px;height:18px;background:#d0d0d0"></div>
<div class="ab" style="left:1426px;top:226px;width:1px;height:18px;background:#d0d0d0"></div>
<div class="ab" style="left:1578px;top:226px;width:1px;height:18px;background:#d0d0d0"></div>
<div class="t" style="left:28px;top:229.37px;width:15px;text-align:center;font-size:12.2px;color:#3b3b3b">A</div>
<div class="t" style="left:43px;top:229.37px;width:11px;text-align:center;font-size:12.2px;color:#3b3b3b">B</div>
<div class="t" style="left:54px;top:229.37px;width:72px;text-align:center;font-size:12.2px;color:#3b3b3b">C</div>
<div class="t" style="left:126px;top:229.37px;width:96px;text-align:center;font-size:12.2px;color:#3b3b3b">D</div>
<div class="t" style="left:222px;top:229.37px;width:171px;text-align:center;font-size:12.2px;color:#3b3b3b">E</div>
<div class="t" style="left:393px;top:229.37px;width:117px;text-align:center;font-size:12.2px;color:#3b3b3b">F</div>
<div class="t" style="left:510px;top:229.37px;width:117px;text-align:center;font-size:12.2px;color:#3b3b3b">G</div>
<div class="t" style="left:627px;top:229.37px;width:10px;text-align:center;font-size:12.2px;color:#3b3b3b">H</div>
<div class="t" style="left:637px;top:229.37px;width:194px;text-align:center;font-size:12.2px;color:#3b3b3b">I</div>
<div class="t" style="left:831px;top:229.37px;width:74px;text-align:center;font-size:12.2px;color:#2f5d43">J</div>
<div class="t" style="left:905px;top:229.37px;width:116px;text-align:center;font-size:12.2px;color:#3b3b3b">K</div>
<div class="t" style="left:1021px;top:229.37px;width:11px;text-align:center;font-size:12.2px;color:#3b3b3b">L</div>
<div class="t" style="left:1032px;top:229.37px;width:193px;text-align:center;font-size:12.2px;color:#3b3b3b">M</div>
<div class="t" style="left:1225px;top:229.37px;width:73px;text-align:center;font-size:12.2px;color:#3b3b3b">N</div>
<div class="t" style="left:1298px;top:229.37px;width:117px;text-align:center;font-size:12.2px;color:#3b3b3b">O</div>
<div class="t" style="left:1415px;top:229.37px;width:11px;text-align:center;font-size:12.2px;color:#3b3b3b">P</div>
<div class="t" style="left:1426px;top:229.37px;width:194px;text-align:center;font-size:12.2px;color:#3b3b3b">Q</div>
<svg style="left:12px;top:228px;" width="14" height="14" viewBox="0 0 14 14"><path d="M13 0.5V13H0.5z" fill="#b9b9b9"/></svg>
<div class="ab" style="left:0px;top:245px;width:28px;height:549px;background:#f0f0f0"></div>
<div class="ab" style="left:27px;top:224px;width:1px;height:570px;background:#c4c4c4"></div>
<div class="ab" style="left:0px;top:462.0px;width:27px;height:37.5px;background:#d3d3d3"></div>
<div class="ab" style="left:25px;top:462.0px;width:2px;height:37.5px;background:#1e6e42"></div>
<div class="ab" style="left:0px;top:293px;width:27px;height:1px;background:#d4d4d4"></div>
<div class="t" style="left:0px;top:278.67px;width:28px;text-align:center;font-size:12.2px;color:#3b3b3b;clip-path:inset(0.0px 0 0 0)">1</div>
<div class="ab" style="left:0px;top:331.5px;width:27px;height:1px;background:#d4d4d4"></div>
<div class="t" style="left:0px;top:317.17px;width:28px;text-align:center;font-size:12.2px;color:#3b3b3b;clip-path:inset(0.0px 0 0 0)">2</div>
<div class="ab" style="left:0px;top:343px;width:27px;height:1px;background:#d4d4d4"></div>
<div class="t" style="left:0px;top:328.67px;width:28px;text-align:center;font-size:12.2px;color:#3b3b3b;clip-path:inset(2.8px 0 0 0)">3</div>
<div class="ab" style="left:0px;top:387px;width:27px;height:1px;background:#d4d4d4"></div>
<div class="t" style="left:0px;top:372.67px;width:28px;text-align:center;font-size:12.2px;color:#3b3b3b;clip-path:inset(0.0px 0 0 0)">4</div>
<div class="ab" style="left:0px;top:424.5px;width:27px;height:1px;background:#d4d4d4"></div>
<div class="t" style="left:0px;top:410.17px;width:28px;text-align:center;font-size:12.2px;color:#3b3b3b;clip-path:inset(0.0px 0 0 0)">5</div>
<div class="ab" style="left:0px;top:462.0px;width:27px;height:1px;background:#d4d4d4"></div>
<div class="t" style="left:0px;top:447.67px;width:28px;text-align:center;font-size:12.2px;color:#3b3b3b;clip-path:inset(0.0px 0 0 0)">6</div>
<div class="ab" style="left:0px;top:499.5px;width:27px;height:1px;background:#d4d4d4"></div>
<div class="t" style="left:0px;top:485.17px;width:28px;text-align:center;font-size:12.2px;color:#1e6e42;clip-path:inset(0.0px 0 0 0)">7</div>
<div class="ab" style="left:0px;top:537.0px;width:27px;height:1px;background:#d4d4d4"></div>
<div class="t" style="left:0px;top:522.67px;width:28px;text-align:center;font-size:12.2px;color:#3b3b3b;clip-path:inset(0.0px 0 0 0)">8</div>
<div class="ab" style="left:0px;top:574.5px;width:27px;height:1px;background:#d4d4d4"></div>
<div class="t" style="left:0px;top:560.17px;width:28px;text-align:center;font-size:12.2px;color:#3b3b3b;clip-path:inset(0.0px 0 0 0)">9</div>
<div class="ab" style="left:0px;top:612.0px;width:27px;height:1px;background:#d4d4d4"></div>
<div class="t" style="left:0px;top:597.67px;width:28px;text-align:center;font-size:12.2px;color:#3b3b3b;clip-path:inset(0.0px 0 0 0)">10</div>
<div class="ab" style="left:0px;top:649.5px;width:27px;height:1px;background:#d4d4d4"></div>
<div class="t" style="left:0px;top:635.17px;width:28px;text-align:center;font-size:12.2px;color:#3b3b3b;clip-path:inset(0.0px 0 0 0)">11</div>
<div class="ab" style="left:0px;top:687.0px;width:27px;height:1px;background:#d4d4d4"></div>
<div class="t" style="left:0px;top:672.67px;width:28px;text-align:center;font-size:12.2px;color:#3b3b3b;clip-path:inset(0.0px 0 0 0)">12</div>
<div class="ab" style="left:0px;top:724.5px;width:27px;height:1px;background:#d4d4d4"></div>
<div class="t" style="left:0px;top:710.17px;width:28px;text-align:center;font-size:12.2px;color:#3b3b3b;clip-path:inset(0.0px 0 0 0)">13</div>
<div class="ab" style="left:0px;top:762.0px;width:27px;height:1px;background:#d4d4d4"></div>
<div class="t" style="left:0px;top:747.67px;width:28px;text-align:center;font-size:12.2px;color:#3b3b3b;clip-path:inset(0.0px 0 0 0)">14</div>
<div class="t" style="left:0px;top:785.17px;width:28px;text-align:center;font-size:12.2px;color:#3b3b3b;clip-path:inset(0.0px 0 0 0)">15</div>
<div class="ab" style="left:54px;top:387px;width:1px;height:407px;background:#e0e0e0"></div>
<div class="ab" style="left:126px;top:387px;width:1px;height:407px;background:#e0e0e0"></div>
<div class="ab" style="left:222px;top:387px;width:1px;height:407px;background:#e0e0e0"></div>
<div class="ab" style="left:393px;top:387px;width:1px;height:407px;background:#e0e0e0"></div>
<div class="ab" style="left:510px;top:387px;width:1px;height:407px;background:#e0e0e0"></div>
<div class="ab" style="left:627px;top:387px;width:1px;height:407px;background:#e0e0e0"></div>
<div class="ab" style="left:54px;top:424.5px;width:573px;height:1px;background:#e0e0e0"></div>
<div class="ab" style="left:54px;top:462.0px;width:573px;height:1px;background:#e0e0e0"></div>
<div class="ab" style="left:54px;top:499.5px;width:573px;height:1px;background:#e0e0e0"></div>
<div class="ab" style="left:54px;top:537.0px;width:573px;height:1px;background:#e0e0e0"></div>
<div class="ab" style="left:54px;top:574.5px;width:573px;height:1px;background:#e0e0e0"></div>
<div class="ab" style="left:54px;top:612.0px;width:573px;height:1px;background:#e0e0e0"></div>
<div class="ab" style="left:54px;top:649.5px;width:573px;height:1px;background:#e0e0e0"></div>
<div class="ab" style="left:54px;top:687.0px;width:573px;height:1px;background:#e0e0e0"></div>
<div class="ab" style="left:54px;top:724.5px;width:573px;height:1px;background:#e0e0e0"></div>
<div class="ab" style="left:54px;top:762.0px;width:573px;height:1px;background:#e0e0e0"></div>
<div class="ab" style="left:637px;top:387px;width:1px;height:407px;background:#e0e0e0"></div>
<div class="ab" style="left:831px;top:387px;width:1px;height:407px;background:#e0e0e0"></div>
<div class="ab" style="left:905px;top:387px;width:1px;height:407px;background:#e0e0e0"></div>
<div class="ab" style="left:1021px;top:387px;width:1px;height:407px;background:#e0e0e0"></div>
<div class="ab" style="left:637px;top:424.5px;width:384px;height:1px;background:#e0e0e0"></div>
<div class="ab" style="left:637px;top:462.0px;width:384px;height:1px;background:#e0e0e0"></div>
<div class="ab" style="left:637px;top:499.5px;width:384px;height:1px;background:#e0e0e0"></div>
<div class="ab" style="left:637px;top:537.0px;width:384px;height:1px;background:#e0e0e0"></div>
<div class="ab" style="left:637px;top:574.5px;width:384px;height:1px;background:#e0e0e0"></div>
<div class="ab" style="left:637px;top:612.0px;width:384px;height:1px;background:#e0e0e0"></div>
<div class="ab" style="left:637px;top:649.5px;width:384px;height:1px;background:#e0e0e0"></div>
<div class="ab" style="left:637px;top:687.0px;width:384px;height:1px;background:#e0e0e0"></div>
<div class="ab" style="left:637px;top:724.5px;width:384px;height:1px;background:#e0e0e0"></div>
<div class="ab" style="left:637px;top:762.0px;width:384px;height:1px;background:#e0e0e0"></div>
<div class="ab" style="left:1032px;top:387px;width:1px;height:407px;background:#e0e0e0"></div>
<div class="ab" style="left:1225px;top:387px;width:1px;height:407px;background:#e0e0e0"></div>
<div class="ab" style="left:1298px;top:387px;width:1px;height:407px;background:#e0e0e0"></div>
<div class="ab" style="left:1415px;top:387px;width:1px;height:407px;background:#e0e0e0"></div>
<div class="ab" style="left:1032px;top:424.5px;width:383px;height:1px;background:#e0e0e0"></div>
<div class="ab" style="left:1032px;top:462.0px;width:383px;height:1px;background:#e0e0e0"></div>
<div class="ab" style="left:1032px;top:499.5px;width:383px;height:1px;background:#e0e0e0"></div>
<div class="ab" style="left:1032px;top:537.0px;width:383px;height:1px;background:#e0e0e0"></div>
<div class="ab" style="left:1032px;top:574.5px;width:383px;height:1px;background:#e0e0e0"></div>
<div class="ab" style="left:1032px;top:612.0px;width:383px;height:1px;background:#e0e0e0"></div>
<div class="ab" style="left:1032px;top:649.5px;width:383px;height:1px;background:#e0e0e0"></div>
<div class="ab" style="left:1032px;top:687.0px;width:383px;height:1px;background:#e0e0e0"></div>
<div class="ab" style="left:1032px;top:724.5px;width:383px;height:1px;background:#e0e0e0"></div>
<div class="ab" style="left:1032px;top:762.0px;width:383px;height:1px;background:#e0e0e0"></div>
<div class="ab" style="left:1426px;top:387px;width:1px;height:407px;background:#e0e0e0"></div>
<div class="ab" style="left:1578px;top:387px;width:1px;height:407px;background:#e0e0e0"></div>
<div class="ab" style="left:1426px;top:424.5px;width:152px;height:1px;background:#e0e0e0"></div>
<div class="ab" style="left:1426px;top:462.0px;width:152px;height:1px;background:#e0e0e0"></div>
<div class="ab" style="left:1426px;top:499.5px;width:152px;height:1px;background:#e0e0e0"></div>
<div class="ab" style="left:1426px;top:537.0px;width:152px;height:1px;background:#e0e0e0"></div>
<div class="ab" style="left:1426px;top:574.5px;width:152px;height:1px;background:#e0e0e0"></div>
<div class="ab" style="left:1426px;top:612.0px;width:152px;height:1px;background:#e0e0e0"></div>
<div class="ab" style="left:1426px;top:649.5px;width:152px;height:1px;background:#e0e0e0"></div>
<div class="ab" style="left:1426px;top:687.0px;width:152px;height:1px;background:#e0e0e0"></div>
<div class="ab" style="left:1426px;top:724.5px;width:152px;height:1px;background:#e0e0e0"></div>
<div class="ab" style="left:1426px;top:762.0px;width:152px;height:1px;background:#e0e0e0"></div>
<div class="ab" style="left:394px;top:388px;width:116px;height:406px;background:#f2f2f2"></div>
<div class="ab" style="left:394px;top:424.5px;width:116px;height:1px;background:#dadada"></div>
<div class="ab" style="left:394px;top:462.0px;width:116px;height:1px;background:#dadada"></div>
<div class="ab" style="left:394px;top:499.5px;width:116px;height:1px;background:#dadada"></div>
<div class="ab" style="left:394px;top:537.0px;width:116px;height:1px;background:#dadada"></div>
<div class="ab" style="left:394px;top:574.5px;width:116px;height:1px;background:#dadada"></div>
<div class="ab" style="left:394px;top:612.0px;width:116px;height:1px;background:#dadada"></div>
<div class="ab" style="left:394px;top:649.5px;width:116px;height:1px;background:#dadada"></div>
<div class="ab" style="left:394px;top:687.0px;width:116px;height:1px;background:#dadada"></div>
<div class="ab" style="left:394px;top:724.5px;width:116px;height:1px;background:#dadada"></div>
<div class="ab" style="left:394px;top:762.0px;width:116px;height:1px;background:#dadada"></div>
<div class="ab" style="left:28px;top:386px;width:1550px;height:2px;background:#d0d0d0"></div>
<div class="ab" style="left:28px;top:245px;width:1550px;height:48px;background:#d9d9d9"></div>
<div class="ab" style="left:274px;top:244px;width:114px;height:49px;background:#000"></div>
<div class="ab" style="left:28px;top:293px;width:1550px;height:38.5px;background:#000"></div>
<div class="ab" style="left:137px;top:302px;width:125px;height:29px;background:#fff"></div>
<div class="t" style="left:201px;top:264.52px;font-size:11.2px;color:#111;font-weight:700">SET-UP</div>
<div class="t" style="left:301.5px;top:256.18px;font-size:11.6px;color:#fff;font-weight:700">INWARD /</div>
<div class="t" style="left:299.8px;top:271.93px;font-size:11.9px;color:#fff;font-weight:700">OUTWARD</div>
<div class="t" style="left:413px;top:264.92px;font-size:11.2px;color:#111;font-weight:700">ANALYSIS</div>
<div class="t" style="left:521.4px;top:264.92px;font-size:11.2px;color:#111;font-weight:700">REPORTS</div>
<div class="t" style="left:612.4px;top:264.92px;font-size:11.2px;color:#111;font-weight:700">DASHBOARDS</div>
<div class="t" style="left:716.4px;top:264.75px;font-size:11.4px;color:#111;font-weight:700">INSTRUCTIONS</div>
<div class="t" style="left:176px;top:310.84px;font-size:12px;color:#3f3f3f;font-weight:700">INWARD</div>
<div class="t" style="left:293.6px;top:310.93px;font-size:11.9px;color:#fff;font-weight:700">OUTWARD</div>
<div class="ab" style="left:0px;top:331px;width:1578px;height:1px;background:#a0a0a0"></div>
<div class="ab" style="left:510px;top:224px;width:1px;height:570px;background:#8f8f8f"></div>
<div class="ab" style="left:55px;top:344px;width:71px;height:41px;background:#d9d9d9"></div>
<div class="t" style="left:67px;top:360.90px;font-size:12.4px;color:#333;font-weight:700">ID</div>
<div class="ab" style="left:108px;top:368px;width:17px;height:17px;background:#fbfbfb;border:1px solid #b9b9b9;border-radius:1px"></div>
<svg style="left:113.5px;top:375px;" width="7" height="4" viewBox="0 0 7 4"><path d="M0 0h7L3.5 4z" fill="#555"/></svg>
<div class="ab" style="left:127px;top:344px;width:95px;height:41px;background:#d9d9d9"></div>
<div class="t" style="left:139px;top:360.90px;font-size:12.4px;color:#333;font-weight:700">Date</div>
<div class="ab" style="left:204px;top:368px;width:17px;height:17px;background:#fbfbfb;border:1px solid #b9b9b9;border-radius:1px"></div>
<svg style="left:209.5px;top:375px;" width="7" height="4" viewBox="0 0 7 4"><path d="M0 0h7L3.5 4z" fill="#555"/></svg>
<div class="ab" style="left:223px;top:344px;width:170px;height:41px;background:#d9d9d9"></div>
<div class="t" style="left:234px;top:360.90px;font-size:12.4px;color:#333;font-weight:700">Supplier</div>
<div class="ab" style="left:375px;top:368px;width:17px;height:17px;background:#fbfbfb;border:1px solid #b9b9b9;border-radius:1px"></div>
<svg style="left:380.5px;top:375px;" width="7" height="4" viewBox="0 0 7 4"><path d="M0 0h7L3.5 4z" fill="#555"/></svg>
<div class="ab" style="left:394px;top:344px;width:116px;height:41px;background:#d9d9d9"></div>
<div class="t" style="left:406px;top:360.90px;font-size:12.4px;color:#333;font-weight:700">Amount</div>
<div class="ab" style="left:492px;top:368px;width:17px;height:17px;background:#fbfbfb;border:1px solid #b9b9b9;border-radius:1px"></div>
<svg style="left:497.5px;top:375px;" width="7" height="4" viewBox="0 0 7 4"><path d="M0 0h7L3.5 4z" fill="#555"/></svg>
<div class="ab" style="left:512px;top:344px;width:115px;height:41px;background:#d9d9d9"></div>
<div class="t" style="left:523px;top:360.90px;font-size:12.4px;color:#333;font-weight:700">Discount</div>
<div class="ab" style="left:609px;top:368px;width:17px;height:17px;background:#fbfbfb;border:1px solid #b9b9b9;border-radius:1px"></div>
<svg style="left:614.5px;top:375px;" width="7" height="4" viewBox="0 0 7 4"><path d="M0 0h7L3.5 4z" fill="#555"/></svg>
<div class="ab" style="left:638px;top:344px;width:193px;height:41px;background:#d9d9d9"></div>
<div class="t" style="left:650px;top:360.90px;font-size:12.4px;color:#333;font-weight:700">Product 1</div>
<div class="ab" style="left:832px;top:344px;width:73px;height:41px;background:#d9d9d9"></div>
<div class="t" style="left:844px;top:360.90px;font-size:12.4px;color:#333;font-weight:700">Qty</div>
<div class="ab" style="left:906px;top:344px;width:115px;height:41px;background:#d9d9d9"></div>
<div class="t" style="left:917px;top:360.90px;font-size:12.4px;color:#333;font-weight:700">Unitary cost</div>
<div class="ab" style="left:1033px;top:344px;width:192px;height:41px;background:#d9d9d9"></div>
<div class="t" style="left:1044px;top:360.90px;font-size:12.4px;color:#333;font-weight:700">Product 2</div>
<div class="ab" style="left:1226px;top:344px;width:72px;height:41px;background:#d9d9d9"></div>
<div class="t" style="left:1238px;top:360.90px;font-size:12.4px;color:#333;font-weight:700">Qty</div>
<div class="ab" style="left:1299px;top:344px;width:116px;height:41px;background:#d9d9d9"></div>
<div class="t" style="left:1311px;top:360.90px;font-size:12.4px;color:#333;font-weight:700">Unitary cost</div>
<div class="ab" style="left:1427px;top:344px;width:151px;height:41px;background:#d9d9d9"></div>
<div class="t" style="left:1438px;top:360.90px;font-size:12.4px;color:#333;font-weight:700">Product 3</div>
<div class="t" style="left:66.5px;top:400.69px;font-size:13.6px;color:#1c1c1c">1</div>
<div class="t" style="left:139px;top:400.26px;font-size:14.1px;color:#1c1c1c">10/01/2018</div>
<div class="t" style="left:234px;top:401.36px;font-size:12.799999999999999px;color:#1c1c1c">Supplier 2</div>
<div class="t" style="left:405px;top:401.43px;font-size:10.6px;color:#1c1c1c">$1.600,00</div>
<div class="t" style="left:650px;top:401.20px;font-size:13.0px;color:#1c1c1c">Product 2</div>
<div class="t" style="left:843.5px;top:400.69px;font-size:13.6px;color:#1c1c1c">40</div>
<div class="t" style="left:915.5px;top:401.43px;font-size:10.6px;color:#1c1c1c">$20,00</div>
<div class="t" style="left:1044px;top:401.20px;font-size:13.0px;color:#1c1c1c">Product 2</div>
<div class="t" style="left:1237.5px;top:400.69px;font-size:13.6px;color:#1c1c1c">40</div>
<div class="t" style="left:1310px;top:401.43px;font-size:10.6px;color:#1c1c1c">$20,00</div>
<div class="t" style="left:66.5px;top:438.19px;font-size:13.6px;color:#1c1c1c">2</div>
<div class="t" style="left:139px;top:437.76px;font-size:14.1px;color:#1c1c1c">10/02/2018</div>
<div class="t" style="left:234px;top:438.86px;font-size:12.799999999999999px;color:#1c1c1c">Supplier 2</div>
<div class="t" style="left:405px;top:438.93px;font-size:10.6px;color:#1c1c1c">$2.000,00</div>
<div class="t" style="left:650px;top:438.70px;font-size:13.0px;color:#1c1c1c">Product 1</div>
<div class="t" style="left:843.5px;top:438.19px;font-size:13.6px;color:#1c1c1c">80</div>
<div class="t" style="left:915.5px;top:438.93px;font-size:10.6px;color:#1c1c1c">$20,00</div>
<div class="t" style="left:1044px;top:438.70px;font-size:13.0px;color:#1c1c1c">Product 2</div>
<div class="t" style="left:1237.5px;top:438.19px;font-size:13.6px;color:#1c1c1c">20</div>
<div class="t" style="left:1310px;top:438.93px;font-size:10.6px;color:#1c1c1c">$20,00</div>
<div class="t" style="left:66.5px;top:475.69px;font-size:13.6px;color:#1c1c1c">3</div>
<div class="t" style="left:139px;top:475.26px;font-size:14.1px;color:#1c1c1c">10/03/2018</div>
<div class="t" style="left:234px;top:476.36px;font-size:12.799999999999999px;color:#1c1c1c">Supplier 1</div>
<div class="t" style="left:405px;top:476.43px;font-size:10.6px;color:#1c1c1c">$420,00</div>
<div class="t" style="left:650px;top:476.20px;font-size:13.0px;color:#1c1c1c">Product 1</div>
<div class="t" style="left:843.5px;top:475.69px;font-size:13.6px;color:#1c1c1c">20</div>
<div class="t" style="left:915.5px;top:476.43px;font-size:10.6px;color:#1c1c1c">$11,00</div>
<div class="t" style="left:1044px;top:476.20px;font-size:13.0px;color:#1c1c1c">Product 2</div>
<div class="t" style="left:1237.5px;top:475.69px;font-size:13.6px;color:#1c1c1c">10</div>
<div class="t" style="left:1310px;top:476.43px;font-size:10.6px;color:#1c1c1c">$20,00</div>
<div class="t" style="left:66.5px;top:513.19px;font-size:13.6px;color:#1c1c1c">4</div>
<div class="t" style="left:139px;top:512.76px;font-size:14.1px;color:#1c1c1c">10/04/2018</div>
<div class="t" style="left:234px;top:513.86px;font-size:12.799999999999999px;color:#1c1c1c">Supplier 1</div>
<div class="t" style="left:405px;top:513.93px;font-size:10.6px;color:#1c1c1c">$620,00</div>
<div class="t" style="left:650px;top:513.70px;font-size:13.0px;color:#1c1c1c">Product 1</div>
<div class="t" style="left:843.5px;top:513.19px;font-size:13.6px;color:#1c1c1c">35</div>
<div class="t" style="left:915.5px;top:513.93px;font-size:10.6px;color:#1c1c1c">$12,00</div>
<div class="t" style="left:1044px;top:513.70px;font-size:13.0px;color:#1c1c1c">Product 2</div>
<div class="t" style="left:1237.5px;top:513.19px;font-size:13.6px;color:#1c1c1c">10</div>
<div class="t" style="left:1310px;top:513.93px;font-size:10.6px;color:#1c1c1c">$20,00</div>
<div class="t" style="left:66.5px;top:550.69px;font-size:13.6px;color:#1c1c1c">5</div>
<div class="t" style="left:139px;top:550.26px;font-size:14.1px;color:#1c1c1c">10/05/2018</div>
<div class="t" style="left:234px;top:551.36px;font-size:12.799999999999999px;color:#1c1c1c">Supplier 2</div>
<div class="t" style="left:405px;top:551.43px;font-size:10.6px;color:#1c1c1c">$500,00</div>
<div class="t" style="left:650px;top:551.20px;font-size:13.0px;color:#1c1c1c">Product 1</div>
<div class="t" style="left:843.5px;top:550.69px;font-size:13.6px;color:#1c1c1c">10</div>
<div class="t" style="left:915.5px;top:551.43px;font-size:10.6px;color:#1c1c1c">$10,00</div>
<div class="t" style="left:1044px;top:551.20px;font-size:13.0px;color:#1c1c1c">Product 2</div>
<div class="t" style="left:1237.5px;top:550.69px;font-size:13.6px;color:#1c1c1c">20</div>
<div class="t" style="left:1310px;top:551.43px;font-size:10.6px;color:#1c1c1c">$20,00</div>
<div class="t" style="left:66.5px;top:588.19px;font-size:13.6px;color:#1c1c1c">6</div>
<div class="t" style="left:139px;top:587.76px;font-size:14.1px;color:#1c1c1c">10/06/2018</div>
<div class="t" style="left:234px;top:588.86px;font-size:12.799999999999999px;color:#1c1c1c">Supplier 1</div>
<div class="t" style="left:405px;top:588.93px;font-size:10.6px;color:#1c1c1c">$600,00</div>
<div class="t" style="left:650px;top:588.70px;font-size:13.0px;color:#1c1c1c">Product 1</div>
<div class="t" style="left:843.5px;top:588.19px;font-size:13.6px;color:#1c1c1c">40</div>
<div class="t" style="left:915.5px;top:588.93px;font-size:10.6px;color:#1c1c1c">$10,00</div>
<div class="t" style="left:1044px;top:588.70px;font-size:13.0px;color:#1c1c1c">Product 2</div>
<div class="t" style="left:1237.5px;top:588.19px;font-size:13.6px;color:#1c1c1c">10</div>
<div class="t" style="left:1310px;top:588.93px;font-size:10.6px;color:#1c1c1c">$20,00</div>
<div class="t" style="left:66.5px;top:625.69px;font-size:13.6px;color:#1c1c1c">7</div>
<div class="t" style="left:139px;top:625.26px;font-size:14.1px;color:#1c1c1c">10/07/2018</div>
<div class="t" style="left:234px;top:626.36px;font-size:12.799999999999999px;color:#1c1c1c">Supplier 1</div>
<div class="t" style="left:405px;top:626.43px;font-size:10.6px;color:#1c1c1c">$1.800,00</div>
<div class="t" style="left:650px;top:626.20px;font-size:13.0px;color:#1c1c1c">Product 1</div>
<div class="t" style="left:843.5px;top:625.69px;font-size:13.6px;color:#1c1c1c">100</div>
<div class="t" style="left:915.5px;top:626.43px;font-size:10.6px;color:#1c1c1c">$15,00</div>
<div class="t" style="left:1044px;top:626.20px;font-size:13.0px;color:#1c1c1c">Product 2</div>
<div class="t" style="left:1237.5px;top:625.69px;font-size:13.6px;color:#1c1c1c">15</div>
<div class="t" style="left:1310px;top:626.43px;font-size:10.6px;color:#1c1c1c">$20,00</div>
<div class="t" style="left:66.5px;top:663.19px;font-size:13.6px;color:#1c1c1c">8</div>
<div class="t" style="left:139px;top:662.76px;font-size:14.1px;color:#1c1c1c">10/08/2018</div>
<div class="t" style="left:234px;top:663.86px;font-size:12.799999999999999px;color:#1c1c1c">Supplier 2</div>
<div class="t" style="left:405px;top:663.93px;font-size:10.6px;color:#1c1c1c">$1.575,00</div>
<div class="t" style="left:650px;top:663.70px;font-size:13.0px;color:#1c1c1c">Product 1</div>
<div class="t" style="left:843.5px;top:663.19px;font-size:13.6px;color:#1c1c1c">65</div>
<div class="t" style="left:915.5px;top:663.93px;font-size:10.6px;color:#1c1c1c">$15,00</div>
<div class="t" style="left:1044px;top:663.70px;font-size:13.0px;color:#1c1c1c">Product 2</div>
<div class="t" style="left:1237.5px;top:663.19px;font-size:13.6px;color:#1c1c1c">30</div>
<div class="t" style="left:1310px;top:663.93px;font-size:10.6px;color:#1c1c1c">$20,00</div>
<div class="t" style="left:66.5px;top:700.69px;font-size:13.6px;color:#1c1c1c">9</div>
<div class="t" style="left:139px;top:700.26px;font-size:14.1px;color:#1c1c1c">10/09/2018</div>
<div class="t" style="left:234px;top:701.36px;font-size:12.799999999999999px;color:#1c1c1c">Supplier 1</div>
<div class="t" style="left:405px;top:701.43px;font-size:10.6px;color:#1c1c1c">$1.100,00</div>
<div class="t" style="left:650px;top:701.20px;font-size:13.0px;color:#1c1c1c">Product 1</div>
<div class="t" style="left:843.5px;top:700.69px;font-size:13.6px;color:#1c1c1c">40</div>
<div class="t" style="left:915.5px;top:701.43px;font-size:10.6px;color:#1c1c1c">$15,00</div>
<div class="t" style="left:1044px;top:701.20px;font-size:13.0px;color:#1c1c1c">Product 2</div>
<div class="t" style="left:1237.5px;top:700.69px;font-size:13.6px;color:#1c1c1c">25</div>
<div class="t" style="left:1310px;top:701.43px;font-size:10.6px;color:#1c1c1c">$20,00</div>
<div class="ab" style="left:830px;top:461px;width:76px;height:40px;border:2px solid #1e6e42"></div>
<div class="ab" style="left:902.5px;top:497.5px;width:5px;height:5px;background:#1e6e42;border:1px solid #fff"></div>
<svg style="left:28px;top:244px;" width="110" height="90" viewBox="0 0 110 90"><polygon points="42.24,49.31 33.31,58.24 20.69,58.24 11.76,49.31 11.76,36.69 20.69,27.76 33.31,27.76 42.24,36.69" fill="#c3ecb5" opacity="1"/><polygon points="103.63,46.89 93.89,56.63 80.11,56.63 70.37,46.89 70.37,33.11 80.11,23.37 93.89,23.37 103.63,33.11" fill="#c3ecb5" opacity="1"/><polygon points="73.55,51.27 63.27,61.55 48.73,61.55 38.45,51.27 38.45,36.73 48.73,26.45 63.27,26.45 73.55,36.73" fill="#707070" opacity="0.88"/><polygon points="57.05,30.77 46.77,41.05 32.23,41.05 21.95,30.77 21.95,16.23 32.23,5.95 46.77,5.95 57.05,16.23" fill="#14c25a" opacity="0.9"/><polygon points="92.55,67.77 82.27,78.05 67.73,78.05 57.45,67.77 57.45,53.23 67.73,42.95 82.27,42.95 92.55,53.23" fill="#14c25a" opacity="0.9"/></svg>
<div class="t" style="left:30px;top:330.60px;font-size:14.8px;font-weight:700;color:#111;-webkit-text-stroke:1px #111;letter-spacing:0px;transform:scaleY(0.95);transform-origin:0 100%">SHEETS TECH</div>
<div class="ab" style="left:1581px;top:224px;width:17px;height:570px;background:#f5f5f5;border-radius:8px"></div>
<svg style="left:1585px;top:230px;" width="9" height="7" viewBox="0 0 9 7"><path d="M4.5 0.5L9 7H0z" fill="#6b6b6b"/></svg>
<div class="ab" style="left:1585px;top:242.5px;width:9px;height:17px;background:#6b6b6b;border-radius:4.5px"></div>
<svg style="left:1585px;top:783.5px;" width="9" height="7" viewBox="0 0 9 7"><path d="M0 0h9L4.5 7z" fill="#6b6b6b"/></svg>
<div class="ab" style="left:0px;top:794px;width:1600px;height:34px;background:#e6e7eb"></div>
<svg style="left:26px;top:803px;" width="8" height="13" viewBox="0 0 8 13"><path d="M7 1L1.5 6.5 7 12" fill="none" stroke="#444" stroke-width="1.3"/></svg>
<svg style="left:59px;top:803px;" width="8" height="13" viewBox="0 0 8 13"><path d="M1 1l5.5 5.5L1 12" fill="none" stroke="#444" stroke-width="1.3"/></svg>
<div class="ab" style="left:100px;top:804px;width:3px;height:3px;background:#444;border-radius:50%"></div>
<div class="ab" style="left:100px;top:809px;width:3px;height:3px;background:#444;border-radius:50%"></div>
<div class="ab" style="left:100px;top:814px;width:3px;height:3px;background:#444;border-radius:50%"></div>
<div class="ab" style="left:119px;top:801px;width:1459px;height:18px;background:#f5f5f5;border-radius:9px"></div>
<svg style="left:123.5px;top:806px;" width="7" height="9" viewBox="0 0 7 9"><path d="M7 0v9L0 4.5z" fill="#6b6b6b"/></svg>
<div class="ab" style="left:136px;top:806px;width:60px;height:9px;background:#6b6b6b;border-radius:4.5px"></div>
<svg style="left:1567px;top:806px;" width="7" height="9" viewBox="0 0 7 9"><path d="M0 0v9l7-4.5z" fill="#6b6b6b"/></svg>
<div class="ab" style="left:0px;top:827px;width:1600px;height:1px;background:#d8d8d8"></div>
<div class="ab" style="left:0px;top:828px;width:1600px;height:22px;background:#f3f3f3"></div>
<div class="t" style="left:11.5px;top:833.69px;font-size:11px;color:#333;font-weight:400;">Pronto</div>
<svg style="left:65px;top:831px;" width="17" height="16" viewBox="0 0 17 16"><rect x="0.5" y="1.5" width="14" height="12" fill="none" stroke="#444"/><path d="M0.5 4.5h14M3 7h3M3 9.5h3" stroke="#444"/><circle cx="11" cy="10.5" r="4" fill="#f3f3f3" stroke="#444"/><circle cx="11" cy="10.5" r="1.8" fill="#444"/></svg>
<svg style="left:99px;top:830px;" width="17" height="18" viewBox="0 0 17 18"><circle cx="8" cy="3" r="2" fill="none" stroke="#444" stroke-width="1.1"/><path d="M1.5 5.5c2 1.5 4 2 6.5 2s4.5-.5 6.5-2M8 7.5v4l-4 5.5M8 11.5l1.5 2M10.5 12l5 5M15.5 12l-5 5" fill="none" stroke="#444" stroke-width="1.1" stroke-linecap="round"/></svg>
<div class="t" style="left:117.6px;top:834.03px;font-size:10.6px;color:#2b2b2b;font-weight:700;">Acessibilidade: investigar</div>
<svg style="left:1156px;top:831px;" width="18" height="17" viewBox="0 0 18 17"><rect x="0.5" y="1.5" width="15" height="10" fill="none" stroke="#444"/><circle cx="13" cy="12.5" r="3.5" fill="#f3f3f3" stroke="#444"/><path d="M4 15.5h6" stroke="#444"/></svg>
<div class="t" style="left:1174.4px;top:834.26px;font-size:10.8px;color:#333;font-weight:400;">Exibir Configurações</div>
<div class="ab" style="left:1295px;top:828px;width:42px;height:22px;background:#dedede"></div>
<svg style="left:1308px;top:831px;" width="15" height="15" viewBox="0 0 15 15"><rect x="0.5" y="0.5" width="14" height="14" fill="none" stroke="#444"/><path d="M4 0.5v14M7.5 0.5v14M11 0.5v14M0.5 4h14M0.5 7.5h14M0.5 11h14" stroke="#444"/></svg>
<svg style="left:1350px;top:831px;" width="15" height="15" viewBox="0 0 15 15"><rect x="0.5" y="0.5" width="14" height="14" fill="none" stroke="#444"/><rect x="3.5" y="3" width="8" height="9" fill="none" stroke="#444"/><path d="M5 5.5h5M5 7.5h5M5 9.5h5" stroke="#444" stroke-width="0.8"/></svg>
<svg style="left:1391px;top:831px;" width="15" height="15" viewBox="0 0 15 15"><path d="M0.5 14.5V0.5h14v14M0.5 14.5h14" fill="none" stroke="#444"/><path d="M5 0.5v7h5v-7" fill="none" stroke="#444"/></svg>
<div class="ab" style="left:1426px;top:838.5px;width:8px;height:1px;background:#444"></div>
<div class="ab" style="left:1439px;top:838.5px;width:104px;height:1px;background:#777"></div>
<div class="ab" style="left:1484px;top:833px;width:5px;height:11px;background:#555"></div>
<div class="ab" style="left:1490px;top:835px;width:1px;height:7px;background:#777"></div>
<div class="ab" style="left:1548px;top:838.5px;width:9px;height:1px;background:#444"></div>
<div class="ab" style="left:1552px;top:834px;width:1px;height:9px;background:#444"></div>
<div class="t" style="left:1570px;top:833.86px;font-size:10.8px;color:#333;font-weight:400;">90%</div></body></html>
